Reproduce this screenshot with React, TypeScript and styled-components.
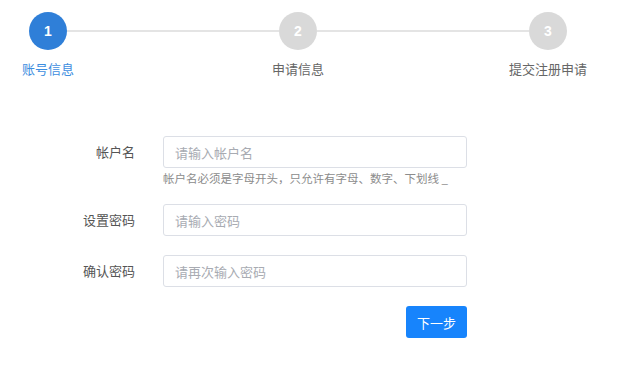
import React, { useState } from "react";
import styled, { createGlobalStyle } from "styled-components";

const GlobalStyle = createGlobalStyle`
	html, body {
		margin: 0;
		padding: 0;
		background: #fff;
	}
	body {
		font-family: "Noto Sans CJK SC", "Liberation Sans", sans-serif;
		color: #606266;
	}
	* {
		box-sizing: border-box;
	}
`;

const steps = ["账号信息", "申请信息", "提交注册申请"];

const fields = [
	{
		label: "帐户名",
		placeholder: "请输入帐户名",
		type: "text",
		help: "帐户名必须是字母开头，只允许有字母、数字、下划线 _",
	},
	{ label: "设置密码", placeholder: "请输入密码", type: "password" },
	{ label: "确认密码", placeholder: "请再次输入密码", type: "password" },
];

export default function App() {
	const [active] = useState(0);
	const [values, setValues] = useState<string[]>(["", "", ""]);

	return (
		<>
			<GlobalStyle />
			<Page>
				<Steps>
					{steps.map((title, i) => (
						<React.Fragment key={title}>
							{i > 0 && <Connector />}
							<Step>
								<Circle active={i === active}>{i + 1}</Circle>
								<StepTitle active={i === active}>{title}</StepTitle>
							</Step>
						</React.Fragment>
					))}
				</Steps>

				<Form onSubmit={(e) => e.preventDefault()}>
					{fields.map((f, i) => (
						<Row key={f.label} hasHelp={!!f.help}>
							<Label>{f.label}</Label>
							<Field>
								<Input
									type={f.type}
									placeholder={f.placeholder}
									value={values[i]}
									onChange={(e) => {
										const next = [...values];
										next[i] = e.target.value;
										setValues(next);
									}}
								/>
								{f.help && <Help>{f.help}</Help>}
							</Field>
						</Row>
					))}
					<Actions>
						<NextButton type="submit">下一步</NextButton>
					</Actions>
				</Form>
			</Page>
		</>
	);
}

const Page = styled.div`
	width: 640px;
	padding-top: 12px;
`;

const Steps = styled.div`
	display: flex;
	align-items: flex-start;
	margin-left: 8px;
	width: 580px;
`;

const Step = styled.div`
	width: 80px;
	display: flex;
	flex-direction: column;
	align-items: center;
	position: relative;
	z-index: 1;
`;

const Connector = styled.div`
	flex: 1;
	height: 2px;
	margin: 18px -21px 0;
	background: #e4e4e4;
`;

const Circle = styled.div<{ active: boolean }>`
	width: 38px;
	height: 38px;
	border-radius: 50%;
	background: ${(p) => (p.active ? "#2f7fd8" : "#d9d9d9")};
	color: #fff;
	display: flex;
	align-items: center;
	justify-content: center;
	font-family: "Liberation Sans", Arial, sans-serif;
	font-weight: bold;
	font-size: 14px;
`;

const StepTitle = styled.div<{ active: boolean }>`
	margin-top: 10px;
	font-size: 13px;
	line-height: 18px;
	white-space: nowrap;
	color: ${(p) => (p.active ? "#3e8ee0" : "#666")};
`;

const Form = styled.form`
	margin: 58px 0 0 35px;
	width: 432px;
	display: flex;
	flex-direction: column;
`;

const Row = styled.div<{ hasHelp: boolean }>`
	display: flex;
	align-items: flex-start;
	margin-bottom: ${(p) => (p.hasHelp ? "17px" : "19px")};
`;

const Label = styled.label`
	width: 100px;
	margin-right: 28px;
	text-align: right;
	font-size: 13px;
	line-height: 32px;
	color: #555;
`;

const Field = styled.div`
	flex: 1;
	display: flex;
	flex-direction: column;
`;

const Input = styled.input`
	width: 304px;
	height: 32px;
	border: 1px solid #dcdfe6;
	border-radius: 3px;
	padding: 0 11px;
	font-size: 13px;
	font-family: inherit;
	color: #333;
	outline: none;
	&::placeholder {
		color: #a8abb2;
	}
	&:focus {
		border-color: #1784fc;
	}
`;

const Help = styled.div`
	margin-top: 2px;
	font-size: 11.5px;
	line-height: 17px;
	color: #8c8c8c;
	white-space: nowrap;
`;

const Actions = styled.div`
	display: flex;
	justify-content: flex-end;
`;

const NextButton = styled.button`
	width: 61px;
	height: 32px;
	border: none;
	border-radius: 3px;
	background: #1784fc;
	color: #fff;
	font-size: 13px;
	font-family: inherit;
	cursor: pointer;
	&:hover {
		background: #3c97fd;
	}
`;
